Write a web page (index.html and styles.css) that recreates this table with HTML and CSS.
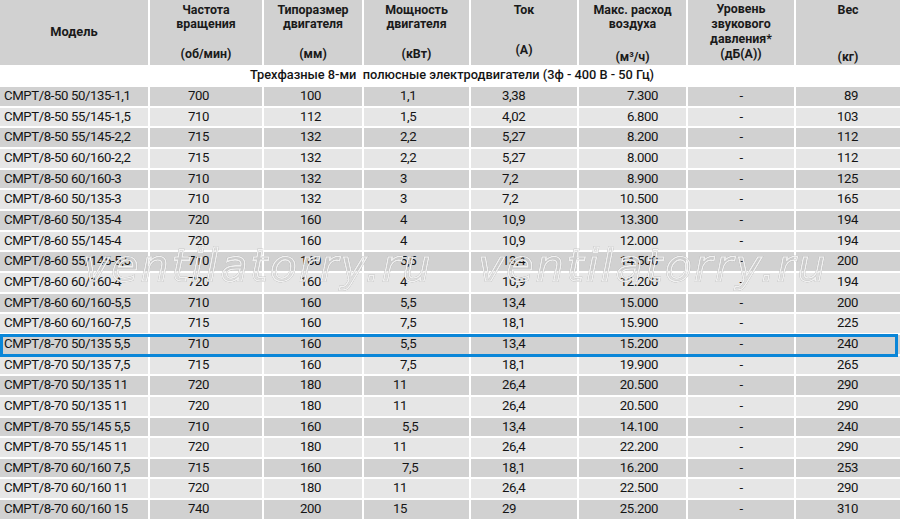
FILE: index.html
```html
<!DOCTYPE html>
<html lang="ru">
<head>
<meta charset="utf-8">
<title>CMPT/8</title>
<link rel="stylesheet" href="styles.css">
</head>
<body>
<div class="sheet">
  <div class="table">
    <div class="head">
      <div class="hc hc-model">Модель</div>
      <div class="hc"><div class="ht">Частота<br>вращения</div><div class="hu">(об/мин)</div></div>
      <div class="hc"><div class="ht">Типоразмер<br>двигателя</div><div class="hu">(мм)</div></div>
      <div class="hc"><div class="ht">Мощность<br>двигателя</div><div class="hu">(кВт)</div></div>
      <div class="hc hc-amp"><div class="ht">Ток</div><div class="hu">(А)</div></div>
      <div class="hc hc-low"><div class="ht">Макс. расход<br>воздуха</div><div class="hu">(м³/ч)</div></div>
      <div class="hc hc-four"><div class="ht">Уровень<br>звукового<br>давления*</div><div class="hu">(дБ(А))</div></div>
      <div class="hc hc-low"><div class="ht">Вес</div><div class="hu">(кг)</div></div>
    </div>
    <div class="section">Трехфазные 8-ми&nbsp; полюсные электродвигатели (3ф - 400 В - 50 Гц)</div>
    <div class="rows">
      <div class="row dk"><span>CMPT/8-50 50/135-1,1</span><span>700</span><span>100</span><span>1,1</span><span>3,38</span><span>7.300</span><span>-</span><span>89</span></div>
      <div class="row lt"><span>CMPT/8-50 55/145-1,5</span><span>710</span><span>112</span><span>1,5</span><span>4,02</span><span>6.800</span><span>-</span><span>103</span></div>
      <div class="row dk"><span>CMPT/8-50 55/145-2,2</span><span>715</span><span>132</span><span>2,2</span><span>5,27</span><span>8.200</span><span>-</span><span>112</span></div>
      <div class="row lt"><span>CMPT/8-50 60/160-2,2</span><span>715</span><span>132</span><span>2,2</span><span>5,27</span><span>8.000</span><span>-</span><span>112</span></div>
      <div class="row dk"><span>CMPT/8-50 60/160-3</span><span>710</span><span>132</span><span>3</span><span>7,2</span><span>8.900</span><span>-</span><span>125</span></div>
      <div class="row lt"><span>CMPT/8-60 50/135-3</span><span>710</span><span>132</span><span>3</span><span>7,2</span><span>10.500</span><span>-</span><span>165</span></div>
      <div class="row dk"><span>CMPT/8-60 50/135-4</span><span>720</span><span>160</span><span>4</span><span>10,9</span><span>13.300</span><span>-</span><span>194</span></div>
      <div class="row lt"><span>CMPT/8-60 55/145-4</span><span>720</span><span>160</span><span>4</span><span>10,9</span><span>12.000</span><span>-</span><span>194</span></div>
      <div class="row dk"><span>CMPT/8-60 55/145-5,5</span><span>710</span><span>160</span><span>5,5</span><span>13,4</span><span>14.500</span><span>-</span><span>200</span></div>
      <div class="row lt"><span>CMPT/8-60 60/160-4</span><span>720</span><span>160</span><span>4</span><span>10,9</span><span>12.200</span><span>-</span><span>194</span></div>
      <div class="row dk"><span>CMPT/8-60 60/160-5,5</span><span>710</span><span>160</span><span>5,5</span><span>13,4</span><span>15.000</span><span>-</span><span>200</span></div>
      <div class="row lt"><span>CMPT/8-60 60/160-7,5</span><span>715</span><span>160</span><span>7,5</span><span>18,1</span><span>15.900</span><span>-</span><span>225</span></div>
      <div class="row dk sel"><span>CMPT/8-70 50/135 5,5</span><span>710</span><span>160</span><span>5,5</span><span>13,4</span><span>15.200</span><span>-</span><span>240</span></div>
      <div class="row lt"><span>CMPT/8-70 50/135 7,5</span><span>715</span><span>160</span><span>7,5</span><span>18,1</span><span>19.900</span><span>-</span><span>265</span></div>
      <div class="row dk"><span>CMPT/8-70 50/135 11</span><span>720</span><span>180</span><span class="sh">11</span><span>26,4</span><span>20.500</span><span>-</span><span>290</span></div>
      <div class="row lt"><span>CMPT/8-70 50/135 11</span><span>720</span><span>180</span><span class="sh">11</span><span>26,4</span><span>20.500</span><span>-</span><span>290</span></div>
      <div class="row dk"><span>CMPT/8-70 55/145 5,5</span><span>710</span><span>160</span><span class="sr">5,5</span><span>13,4</span><span>14.100</span><span>-</span><span>240</span></div>
      <div class="row lt"><span>CMPT/8-70 55/145 11</span><span>720</span><span>180</span><span class="sh">11</span><span>26,4</span><span>22.200</span><span>-</span><span>290</span></div>
      <div class="row dk"><span>CMPT/8-70 60/160 7,5</span><span>715</span><span>160</span><span class="sr">7,5</span><span>18,1</span><span>16.200</span><span>-</span><span>253</span></div>
      <div class="row lt"><span>CMPT/8-70 60/160 11</span><span>720</span><span>180</span><span class="sh">11</span><span>26,4</span><span>22.500</span><span>-</span><span>290</span></div>
      <div class="row dk"><span>CMPT/8-70 60/160 15</span><span>740</span><span>200</span><span class="sh">15</span><span>29</span><span>25.200</span><span>-</span><span>310</span></div>
    </div>
  </div>
  <div class="watermarks">
    <span class="wm">ventilatorry.ru</span>
    <span class="wm">ventilatorry.ru</span>
  </div>
</div>
</body>
</html>
```

FILE: styles.css
```css
html, body {
  margin: 0;
  padding: 0;
  background: #ffffff;
}

.sheet {
  position: relative;
  width: 900px;
  height: 524px;
  overflow: hidden;
  font-family: Roboto, "Liberation Sans", sans-serif;
  color: #141414;
}

.table {
  display: flex;
  flex-direction: column;
}

.head,
.row {
  display: grid;
  grid-template-columns: 148px 112px 98px 105px 106px 107px 106px 1fr;
  column-gap: 2px;
}

.head {
  height: 65px;
}

.hc {
  background: #d1d1d1;
  display: flex;
  flex-direction: column;
  justify-content: space-between;
  align-items: center;
  text-align: center;
  font-size: 12.4px;
  font-weight: 700;
  line-height: 14px;
  padding: 3px 2px 4px;
  color: #1a1a1a;
}

.hc-model {
  justify-content: center;
  font-size: 12.8px;
  padding-top: 2px;
}

.hc-amp {
  padding-bottom: 8px;
}

.hc-low {
  padding-bottom: 1px;
}

.hc-four {
  padding-top: 1px;
  padding-bottom: 4px;
}

.hc-four .ht {
  line-height: 15px;
}

.section {
  height: 22px;
  line-height: 20px;
  text-align: center;
  font-size: 12.8px;
  font-weight: 500;
  color: #141414;
  padding-left: 4px;
}

.rows {
  display: flex;
  flex-direction: column;
  row-gap: 2px;
}

.row {
  height: 18.67px;
  line-height: 18.67px;
  font-size: 13.2px;
  letter-spacing: -0.4px;
}

.row span {
  white-space: nowrap;
}

.row.dk span {
  background: #d1d1d1;
}

.row.lt span {
  background: #e6e6e6;
}

.row span:nth-child(1) { padding-left: 4px; }
.row span:nth-child(2) { padding-left: 38px; }
.row span:nth-child(3) { padding-left: 36px; }
.row span:nth-child(4) { padding-left: 36px; }
.row span:nth-child(4).sh { padding-left: 29px; }
.row span:nth-child(4).sr { padding-left: 38px; }
.row span:nth-child(5) { padding-left: 31px; }
.row span:nth-child(6) { text-align: right; padding-right: 28px; }
.row span:nth-child(7) { text-align: center; }
.row span:nth-child(8) { text-align: right; padding-right: 42px; }

.row.sel {
  position: relative;
}

.row.sel::after {
  content: "";
  position: absolute;
  left: 0;
  right: 2px;
  top: -1px;
  bottom: -3px;
  border: 3px solid #0a86d8;
  pointer-events: none;
}

.watermarks {
  position: absolute;
  left: 83px;
  top: 244px;
  display: flex;
  gap: 55px;
  pointer-events: none;
  filter: drop-shadow(0 0 0.7px rgba(0, 0, 0, 0.45));
}

.wm {
  width: 340px;
  font-family: "DejaVu Sans", sans-serif;
  font-style: oblique;
  font-size: 44px;
  line-height: 44px;
  letter-spacing: 2.5px;
  white-space: nowrap;
  color: rgba(255, 255, 255, 0.1);
  -webkit-text-stroke: 1.6px rgba(246, 246, 246, 0.95);
}
```
